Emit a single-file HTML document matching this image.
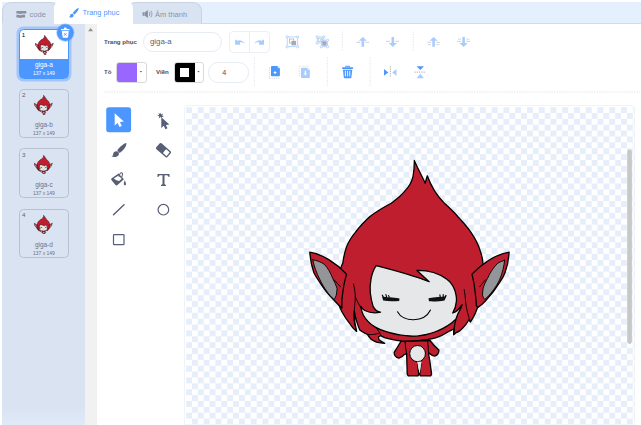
<!DOCTYPE html>
<html lang="vi">
<head>
<meta charset="utf-8">
<title>Scratch - Trang phục</title>
<style>
html,body{margin:0;padding:0;}
body{width:641px;height:425px;overflow:hidden;background:#fff;position:relative;font-family:"Liberation Sans",sans-serif;color:#575e75;}
.abs{position:absolute;}
#hdr{left:2px;top:2px;width:639px;height:21px;background:#e5f0ff;border-bottom:1px solid #d3dbe6;}
.tab{position:absolute;box-sizing:border-box;background:#d9e3f2;border:1px solid #c9d3e3;border-bottom:none;font-size:7.5px;color:#8a93a6;white-space:nowrap;}
#tab1{left:2px;top:2px;width:55px;height:22px;border-radius:9px 6px 0 0;}
#tab3{left:130px;top:2px;width:72px;height:22px;border-radius:6px 9px 0 0;}
#tab2{left:54px;top:0px;width:79px;height:24px;border-radius:8px 8px 0 0;background:#fff;border-color:#fff;color:#4c97ff;z-index:3;}
.tab span{position:absolute;}
#side{left:2px;top:23.4px;width:83px;height:402px;background:#d9e3f2;}
#sidebot{left:2px;top:408px;width:83px;height:17px;background:linear-gradient(#d9e3f2,#e1eaf7);}
#sscroll{left:85px;top:23.4px;width:12px;height:402px;background:#f1f1f1;}
.tile{position:absolute;box-sizing:border-box;left:18.8px;width:50.2px;height:49.6px;border:1.25px solid #bac1ce;border-radius:4.5px;}
.tile .num{position:absolute;left:2.3px;top:1.5px;font-size:6.2px;color:#575e75;}
.tile .nm{position:absolute;left:0;right:0;text-align:center;top:31.2px;font-size:6.4px;color:#6b7288;}
.tile .sz{position:absolute;left:0;right:0;text-align:center;top:40.2px;font-size:5px;color:#6b7288;}
.tile svg{position:absolute;left:14.7px;top:5.2px;width:18.3px;height:19.6px;}
#t1{top:28.7px;height:50.7px;border:1.7px solid #4c97ff;background:#fff;box-shadow:0 0 0 2.5px rgba(76,151,255,.38);overflow:visible;}
#t1 .lab{position:absolute;left:0;right:0;top:29.5px;bottom:0;background:#4c97ff;border-radius:0 0 2.5px 2.5px;}#t1 svg{left:15.5px;top:5.6px}#t1 .num{left:1.9px;top:1.2px}#t1 .nm{top:31.3px}#t1 .sz{top:40.1px}
#t1 .nm,#t1 .sz{color:#fff;}
.lbl{position:absolute;font-size:6.1px;font-weight:bold;color:#484d61;white-space:nowrap;}
.pill{position:absolute;box-sizing:border-box;border:1px solid #e7ebf2;border-radius:10px;background:#fff;}
.vdash{position:absolute;width:0;border-left:1px dashed #d9d9d9;}
</style>
</head>
<body>
<div id="hdr" class="abs"></div>
<div id="tab1" class="tab"><span style="left:26.6px;top:6.5px;">code</span></div>
<div id="tab3" class="tab"><span style="left:24px;top:6.5px;">Âm thanh</span></div>
<div id="tab2" class="tab"><span style="left:27.5px;top:6.800px;font-size:7.350px">Trang phục</span></div>

<div id="side" class="abs"></div>
<div id="sidebot" class="abs"></div>
<div id="sscroll" class="abs"></div>

<div id="t1" class="tile"><div class="lab"></div><span class="num" style="color:#000">1</span><span class="nm">giga-a</span><span class="sz">137 x 149</span><svg viewBox="308 159 203 218" stroke-width="3.5"><use href="#gigaart"/></svg></div>
<div id="t2" class="tile" style="top:88.8px"><span class="num">2</span><span class="nm">giga-b</span><span class="sz">137 x 149</span><svg viewBox="308 159 203 218" stroke-width="3.5"><use href="#gigaart"/></svg></div>
<div id="t3" class="tile" style="top:148.4px"><span class="num">3</span><span class="nm">giga-c</span><span class="sz">137 x 149</span><svg viewBox="308 159 203 218" stroke-width="3.5"><use href="#gigaart"/></svg></div>
<div id="t4" class="tile" style="top:208.6px"><span class="num">4</span><span class="nm">giga-d</span><span class="sz">137 x 149</span><svg viewBox="308 159 203 218" stroke-width="3.5"><use href="#gigaart"/></svg></div>

<!-- toolbar row 1 -->
<span class="lbl" style="left:104px;top:38px;">Trang phục</span>
<div class="pill" style="left:142.5px;top:31.5px;width:79px;height:20.5px;"><span style="position:absolute;left:6.5px;top:4.6px;font-size:7.8px;color:#575e75;">giga-a</span></div>

<!-- toolbar row 2 -->
<span class="lbl" style="left:104px;top:68px;">Tô</span>
<span class="lbl" style="left:156px;top:68px;">Viền</span>
<div class="pill" style="left:208px;top:61.5px;width:41px;height:21px;"><span style="position:absolute;left:13.3px;top:5.6px;font-size:7.2px;color:#4a4f63;">4</span></div>


<!-- toolbar widgets -->
<div class="abs" style="left:229px;top:31px;width:40.5px;height:21.5px;box-sizing:border-box;border:1px solid #ebeef4;border-radius:4px;"></div>
<div class="abs" style="left:249px;top:31px;width:1px;height:21.5px;background:#ebeef4;"></div>
<div class="abs" style="left:116px;top:62px;width:30.5px;height:20.5px;box-sizing:border-box;border:1px solid #d9d9d9;border-radius:3px;background:#fff;overflow:hidden;"><div style="position:absolute;left:0;top:0;width:19.5px;height:20px;background:#9966ff;"></div></div>
<div class="abs" style="left:173.5px;top:62px;width:30.5px;height:20.5px;box-sizing:border-box;border:1px solid #d9d9d9;border-radius:3px;background:#fff;overflow:hidden;"><div style="position:absolute;left:-1px;top:-1px;width:21px;height:21px;background:#000;"></div><div style="position:absolute;left:5px;top:5px;width:9px;height:9px;background:#fff;"></div></div>

<svg id="icons" class="abs" style="left:0;top:0;z-index:5;" width="641" height="425" viewBox="0 0 641 425">
<!-- tab icons -->
<g fill="#8a90a0"><path d="M16.4 10.9h9.9v2.6h-4.6l-.5.6h-1.6l-.5-.6h-2.7z"/><path d="M16.4 14.7h2.7l.5.6h1.6l.5-.6h3.4v2.7h-3.4l-.5.5h-1.6l-.5-.5h-2.7z"/></g>
<path d="M78.7 7.7c-1.5.3-4.6 3.3-5.9 5.4l1.5 1.4c2-1.4 4.6-4.7 4.4-6.8zM72.1 13.7c-1.3 0-2.2 1-2.1 2.3c0 .5-.5.9-1 .9c1.5 .9 3.5 .6 4.3-.5c.5-.8 .3-1.8-.2-2.3c-.3-.2-.6-.4-1-.4z" fill="#4c97ff"/>
<g fill="#8a90a0"><path d="M142.6 12.3h2v3.4h-2zM144.9 12.3l3-2.4v8.2l-3-2.4z"/><path d="M149.2 11.9c.8 .6 .8 3.6 0 4.2" fill="none" stroke="#8a90a0" stroke-width=".9"/><path d="M150.8 10.8c1.5 1.4 1.5 5 0 6.4" fill="none" stroke="#8a90a0" stroke-width=".8"/></g>
<!-- fill/outline dropdown carets -->
<path d="M139.7 71l1.2 1.4l1.2-1.4z" fill="#575e75"/>
<path d="M197.3 71l1.2 1.4l1.2-1.4z" fill="#575e75"/>
<!-- undo / redo -->
<g fill="#a9ccff"><path d="M235.1 39.7h1.2l.8 1c2.5-1.2 6-.3 7.8 3.3c-1.8-1.7-3.5-2-4.9-1.4v2.2h-4.9z"/><path d="M264 39.7h-1.2l-.8 1c-2.5-1.2-6-.3-7.8 3.3c1.8-1.7 3.5-2 4.9-1.4v2.2h4.9z"/></g>
<!-- group -->
<g stroke="#a9ccff" stroke-width=".8" fill="none"><rect x="287.2" y="36.9" width="10.5" height="9.8"/><rect x="317.2" y="36.9" width="6.6" height="6.1"/><rect x="321.4" y="40.2" width="6.1" height="6.5"/></g>
<g fill="#fff" stroke="#a9ccff" stroke-width=".8"><circle cx="287.2" cy="36.9" r="1.15"/><circle cx="297.7" cy="36.9" r="1.15"/><circle cx="287.2" cy="46.7" r="1.15"/><circle cx="297.7" cy="46.7" r="1.15"/>
<circle cx="317.2" cy="36.9" r="1.15"/><circle cx="323.8" cy="36.9" r="1.15"/><circle cx="317.2" cy="43" r="1.15"/><circle cx="321.4" cy="40.2" r="1.15"/><circle cx="327.5" cy="40.2" r="1.15"/><circle cx="321.4" cy="46.7" r="1.15"/><circle cx="327.5" cy="46.7" r="1.15"/></g>
<rect x="289.6" y="39" width="4.2" height="4" fill="none" stroke="#a7aab5" stroke-width=".7"/><rect x="291.4" y="40.9" width="4.7" height="4.4" fill="#a7aab5"/>
<rect x="318.5" y="38.2" width="3.6" height="3.3" fill="none" stroke="#b5b8c2" stroke-width=".6"/><rect x="322.3" y="41.2" width="4.3" height="4.5" fill="#a7aab5"/>
<!-- order arrows -->
<g fill="#a9ccff"><path d="M362.8 36.9l4.1 3.9h-2.8v5.9h-2.6v-5.9h-2.8z"/><path d="M392.8 47l4.1-4h-2.8v-6.1h-2.6v6.1h-2.8z"/><path d="M433.6 36.9l4.1 3.9h-2.8v5.9h-2.6v-5.9h-2.8z"/><path d="M463.6 47l4.1-4h-2.8v-6.1h-2.6v6.1h-2.8z"/></g>
<g stroke="#c3c6ce" stroke-width=".8" fill="none"><path d="M356.4 42.3h3.9M365.4 42.3h3.8M386 41.3h4M395.4 41.3h3.8M427.2 42.3h3.9M436.3 42.3h3.9M428.1 44.6h2.8M436.5 44.6h2.8M456.9 41.4h4.2M466.2 41.4h4M458.1 39.2h2.8M466.5 39.2h2.8"/></g>
<!-- dashed dividers -->
<g stroke="#dedede" stroke-width=".75" stroke-dasharray="1.4 1.1" fill="none"><path d="M342.3 31.5v20M413.3 31.5v20M254.3 57.5v28.5M327.3 57.5v28.5M370.1 57.5v28.5M104 92h537"/></g>
<!-- tools -->
<rect x="106.2" y="107.3" width="24.9" height="24.9" rx="2.6" fill="#4c97ff"/>
<path d="M114.7 113.2v12.3l2.9-2.5l1.9 4l2.3-1.1l-1.9-3.9l3.9-.4z" fill="#fff"/>
<g fill="#575e75">
<path d="M161.3 117.2v10.7l2.5-2.1l1.6 3.5l2.1-1l-1.6-3.4l3.5-.4z"/>
<path d="M160.6 112.4l.5 2.1l2.1-.9l-1.1 1.9l1.9 1.1l-2.2 .4l.1 1.1l-1.4-1.1l-1.700 1.500l.5-2.2l-2.1-.5l2-1l-.9-2l1.8 1.1z"/>
<path d="M126.3 143.1c-2.400 .2-7.200 4.500-9.100 7.500l2.500 2.400c3.200-1.900 7.300-6.600 6.600-9.900zM116.400 151.300c-2 0-3.400 1.500-3.300 3.400c0 .8-.9 1.400-1.900 1.300c2.400 1.600 5.900 1.200 7.300-.8c.8-1.200 .5-2.700-.4-3.400c-.5-.3-1.100-.5-1.700-.5z"/>
<g transform="translate(163.5 150.2) rotate(41)"><rect x="-7.4" y="-3.9" width="14.8" height="7.8" rx="1.4"/><rect x="1.3" y="-2.5" width="4.8" height="5" rx=".6" fill="#fff"/></g>

<path d="M111.7 178.3l6.9-4.7l5.3 5.7l-6.4 5.7q-1.2 .9-2.2-.3l-3.9-4.8q-.7-.9 .3-1.600zM124.700 180.200c.8 1.300 1.300 2.500 1.300 3.700c0 .9-.5 1.400-1.100 1.400s-1.100-.5-1.100-1.400c0-1.200 .4-2.400 .9-3.700z"/><path d="M113.800 178.600l4.700-3.200l3.200 3.400l-2.600 2.300q-3-.3-5.300-2.500z" fill="#fff"/>
<path d="M121.900 172.300c-1-.3-2.200 .6-2.800 2.200l-.7 2.200l.9 .4l.7-2.300c.4-1.100 1.100-1.700 1.500-1.600s.6 .9 .3 2l-.6 2.100l.9 .4l.7-2.200c.5-1.600 .1-2.900-.9-3.200z"/>
<path d="M157.500 173.900h12v3h-.9q-.3-1.700-1.700-1.700h-2.400v8.600q0 1.100 1.500 1.200v.9h-5v-.9q1.500-.1 1.500-1.200v-8.600h-2.400q-1.400 0-1.700 1.700h-.9z"/>
</g>
<path d="M113.5 214.8l10.5-10.1" stroke="#575e75" stroke-width="1.4" stroke-linecap="round" fill="none"/>
<circle cx="163.4" cy="209.7" r="5.3" stroke="#575e75" stroke-width="1.2" fill="none"/>
<rect x="113.5" y="234.6" width="10.5" height="10" rx=".6" stroke="#575e75" stroke-width="1.2" fill="none"/>
<path d="M117.2 177.3l3.4-2.3l2 3l-3.4 2.3z" fill="#fff" opacity="0"/>
<!-- sidebar scroll arrow -->
<path d="M88.1 31.2l2.500-3.100l2.500 3.100z" fill="#909090"/>
<!-- delete button -->
<circle cx="65.3" cy="32.6" r="9.3" fill="#4c97ff" opacity=".35"/>
<circle cx="65.3" cy="32.6" r="8.4" fill="#4c97ff"/>
<g fill="#fff"><rect x="61" y="29" width="8.6" height="1.3" rx=".5"/><path d="M64 27.6h2.6v1.4h-2.6z"/><path d="M61.9 30.9h6.8l-.6 6.1q-.1 .8-.9 .8h-3.8q-.8 0-.9-.8z"/></g>
<path d="M64.1 33.2l2.4 2.5M66.5 33.2l-2.4 2.5" stroke="#4c97ff" stroke-width=".9" fill="none"/>
<!-- copy / paste -->
<path d="M269.4 67.4v11.2M269.4 78.3h10" stroke="#c9ccd3" stroke-width=".8" stroke-dasharray="1.2 1" fill="none"/>
<path d="M271 66.8q0-.8 .8-.8h5.8l2.3 2.3v7.2q0 .8-.8 .8h-7.3q-.8 0-.8-.8z" fill="#4c97ff"/>
<path d="M277.6 66v1.6q0 .7 .7 .7h1.6z" fill="#cfe2ff"/>
<path d="M275 70.6l.6 1.4l1.4 .6l-1.4 .6l-.6 1.4l-.6-1.4l-1.4-.6l1.4-.6z" fill="#fff"/>
<path d="M299.3 76.3v-10.1h10" stroke="#d5d8de" stroke-width=".8" stroke-dasharray="1.2 1" fill="none"/>
<path d="M301 68.6q0-.8 .8-.8h5.7l2.3 2.3v7.2q0 .8-.8 .8h-7.2q-.8 0-.8-.8z" fill="#a9ccff"/>
<path d="M307.5 67.8v1.6q0 .7 .7 .7h1.6z" fill="#e2eeff"/>
<path d="M304.7 70.8h1.4v2.6h1.1l-1.8 2.1l-1.8-2.1h1.1z" fill="#fff"/>
<!-- trash -->
<g fill="#4c97ff"><path d="M346 65.7h3.2q.7 0 .7 .7v1h-1v-.7h-2.6v.7h-1v-1q0-.7 .7-.7z"/><rect x="342" y="67.3" width="11.2" height="1.8" rx=".8"/><path d="M342.9 69.7h9.4l-.9 7.6q-.1 .9-1 .9h-5.6q-.9 0-1-.9z"/></g>
<path d="M345.4 70.8v5.6M347.6 70.8v5.6M349.8 70.8v5.6" stroke="#fff" stroke-width=".9" fill="none"/>
<!-- flips -->
<path d="M384 69.1l4.3 3.3l-4.3 3.3z" fill="#4c97ff"/><path d="M396.5 69.1l-4.3 3.3l4.3 3.3z" fill="#a9ccff"/><path d="M390.4 66.2v11.5" stroke="#9a9eab" stroke-width=".8" stroke-dasharray="1.3 1" fill="none"/>
<path d="M416.6 66.2h7.4l-3.7 3.9z" fill="#4c97ff"/><path d="M416.6 78.2h7.4l-3.7-4.4z" fill="#a9ccff"/><path d="M414.4 72.1h11.6" stroke="#9a9eab" stroke-width=".8" stroke-dasharray="1.3 1" fill="none"/>
</svg>

<!-- canvas -->
<div id="cv" class="abs" style="left:184px;top:105px;width:451px;height:330px;box-sizing:border-box;border:1px solid #f0f3f7;border-radius:3px;background:#fff;"></div>
<svg id="art" class="abs" style="left:0;top:0;" width="641" height="425" viewBox="0 0 641 425">
<defs>
<pattern id="chk" x="186.1" y="107.1" width="11.755" height="11.755" patternUnits="userSpaceOnUse">
<rect x="0" y="0" width="5.8775" height="5.8775" fill="#e6eef9"/>
<rect x="5.8775" y="5.8775" width="5.8775" height="5.8775" fill="#e6eef9"/>
</pattern>
<clipPath id="cvclip"><rect x="186.1" y="107.1" width="447.4" height="320"/></clipPath>
</defs>
<rect x="186.1" y="107.1" width="447.4" height="320" fill="url(#chk)"/>
<g id="giga" clip-path="url(#cvclip)" stroke-width="1.3"><g id="gigaart" stroke="#000" stroke-linejoin="round" stroke-linecap="round">
<!-- body -->
<path d="M401.2 341 C398.5 345.5 396.300 349 394.200 352.300 C394 355.200 396 357.700 398.900 358.200 C401 357.700 402.800 356.500 404.200 354.700 L406.600 353.700 C406.900 360 407 368 407.200 373.400 Q407.300 375.800 409.500 375.900 L417 375.900 Q418.800 375.800 418.600 373.600 L417.500 362 L421.300 362 L419.700 373.600 Q419.500 375.800 421.500 375.900 L429.500 375.900 Q431.700 375.800 431.500 373.400 C430.800 367 429.600 360 428.600 353.500 L429.300 353.200 C431 354.800 432.800 355.800 434.700 356.100 C437.300 355.200 439 352.800 438.900 350 C435.500 347 432.500 344 430 340.500Z" fill="#bf1e2e"/>
<path d="M417.300 361.500 L419.600 373.500 L421.500 361.500Z" fill="#e6e7e8" stroke="none"/>
<ellipse cx="417.600" cy="353.600" rx="7.900" ry="8.100" fill="#e6e7e8" stroke-width="1"/>
<path d="M417.300 361.700 L419.600 373.500 L421.400 361.700Z" fill="#e6e7e8" stroke="none"/>
<path d="M405.100 342.300 C405.300 346 405.800 350 406.700 354 M427.700 341.500 C428.200 346 428.300 350 428.500 353.500" fill="none" stroke-width="1"/>
<!-- hair back silhouette -->
<path id="hairback" d="M414.3 160.5 C417 167 422 176 425.2 183.2 L427.3 175.8 C431 186 437 196 444.4 203.2 C450 208.5 455 213 457.7 216.5 C462 221 467 226.5 471 232.4 C475.5 239 478.5 245 480.3 251 C482 256 482.8 260 482.9 263 C484 275 483 290 479.4 302 C477 310 474 317 470.4 322 C469.8 321 469.4 320.3 469 319.5 C467.5 322.5 465.5 325.5 463 327.8 C462 328.800 461 329.800 460 330.600 C458.800 331.400 457.500 332.100 456.100 332.700 C455.300 333.400 454.500 334.100 453.700 334.800 L453.800 329 C452.400 329.700 451 330.300 449.500 331 C447.400 332.300 445.200 333.600 443 334.800 C440.300 336 437.500 337.100 434.700 338.100 C432 338.700 429.300 339.300 426.500 339.700 C423.800 340.100 421 340.400 418.200 340.600 C415.500 340.800 412.800 341 410 341 C407 341.200 404 341.200 401.200 341 C398.400 340.700 395.700 340.300 393 339.700 C390.200 339.100 387.400 338.500 384.700 337.700 C383.300 337.100 381.900 336.400 380.600 335.600 C379.900 336 379.200 336.400 378.500 336.800 C378.600 337.800 378.800 338.800 379 339.700 C380.800 341.100 382.700 342.300 384.700 343.400 C381.900 343.200 379.200 342.800 376.500 342.200 C374.500 341.300 372.500 340.200 370.700 338.900 C369.500 337.500 368.400 336 367.400 334.400 C364.800 333.200 362.300 331.800 360 330.200 C357.500 325 355.500 318 354.300 311 C354 318 355 325 356.600 331.400 C353.500 329 351 326 349.200 322.800 C346.500 319.500 344.500 316.500 342.600 313 C340.500 309.500 339 305.500 337.600 301.400 C336.500 287 338 272 342.800 263 C343.500 258 344.500 253 346 248.400 C348 242.500 351.500 237 355.300 232.400 C359.500 226.500 364.500 221.500 369.900 216.500 C377 211 384 207 391.200 203.200 C397 199 402 195 405.800 189.900 C409.500 186 411.800 181.500 413 176.600 C414 171 414.400 166 414.300 160.500Z" fill="#bf1e2e"/>
<!-- ears -->
<path d="M309.8 252.2 C322 254 336 263 346.5 274.1 C344.5 281 343 289 342.3 296 C341.8 300 341.7 304 341.9 308 C339 305.5 336.5 303 334.1 300.3 C328.5 294.5 323.5 288.5 320 282.6 C317.5 279 315.5 276 313.9 272.7 C311.5 266 310.2 259 309.8 252.2Z" fill="#bf1e2e"/>
<path d="M312.8 259.8 C317 260.5 321 262 324.2 264.2 C328 268 330.5 273 332.7 278.4 C334.5 282 336 285 337 288.2 C337 291 336.7 293 336.2 295.3 C335.6 297 335 298.5 334.1 299.5 C329 295 324 288 320 279.8 C316.5 273 314 266 312.8 259.8Z" fill="#939598" stroke-width=".9"/>
<path d="M334.1 279.8 L340.5 286.8" fill="none" stroke-width=".9"/>
<path d="M509.1 252.2 C497 254 483 263 472 274.1 C473.8 281 475 289 475.6 296 C476 300 476.3 303 476.4 306 L478.3 307.3 C481 305.5 483 303.5 485.4 301 C491 295 496 288.5 499.5 282.6 C502 279 503.8 276 505 272.7 C507.5 266 508.7 259 509.1 252.2Z" fill="#bf1e2e"/>
<path d="M504.6 260.3 C502 261 499.5 262 497.4 263.5 C493 268 490 273 487.5 278.4 C485.5 282 484 285 483.2 288.2 C482.7 291 482.5 293 482.5 295.3 C483 297 483.8 298.5 484.7 299.5 C490 295 495.5 288 499.5 280 C502.5 273 504 266 504.6 260.3Z" fill="#939598" stroke-width=".9"/>
<path d="M485.4 279.8 L479.7 286.8" fill="none" stroke-width=".9"/>
<!-- face -->
<path id="face" stroke="none" d="M360.7 306.4 C361.2 309.5 362 312.5 363.3 315 C364.6 317.5 366.2 319.7 368.2 321.6 C370.3 323.8 372.8 325.8 375.7 327.4 C378.5 328.9 381.5 330.1 384.7 331.1 C387.4 332 390.2 332.8 393 333.5 C395.7 334.2 398.4 334.8 401.2 335.2 C404 335.6 407 335.9 410 336 C412.8 336.1 415.5 336 418.2 335.8 C421 335.5 423.8 335.1 426.5 334.5 C429.3 333.8 432 333 434.7 332 C437.5 331 440.3 329.700 443 328.300 C445.900 326.800 448.600 325.100 451.200 323.200 C452.600 322.200 453.800 321.100 454.900 320 L464 305 L460 280 L440 262 L400 258 L374 264 L362 290Z" fill="#e6e7e8"/>
<!-- front hair fills (no stroke) -->
<path d="M376.2 265.7 C371 273 369.5 285 370.3 293.2 C371 299 372 303 373.1 306.4 C375 310 378 312 380.5 312.1 C375 313.5 369 312.5 364.8 310.5 C363 309.5 361.5 308 360.7 306.4 L350 300 L352 270 L368 255 L400 250 L450 255 L470 280 L470 310 L455 322 C455.5 319 456.5 316.5 458 313.5 C459.5 311 461 308 462.1 304.7 C459.5 309 456 312 452.7 313 C455 309.5 456 306 456.4 301.4 C456.8 298 456 294 454.7 289.9 C453 285.5 450 281.5 446.5 279 C439 273.5 428 270.2 416.9 270.4 L429.2 281.7 C412 275 393 270 376.2 265.7Z" fill="#bf1e2e" stroke="none"/>
<!-- front hair strokes -->
<path d="M376.2 265.7 C371 273 369.5 285 370.3 293.2 C371 299 372 303 373.1 306.4 C375 310 378 312 380.5 312.1 C375 313.5 369 312.5 364.8 310.5 C363 309.5 361.5 308 360.7 306.4" fill="none"/><path d="M360.7 306.4 C361.2 309.5 362 312.5 363.3 315 C364.6 317.5 366.2 319.7 368.2 321.6 C370.3 323.8 372.8 325.8 375.7 327.4 C378.5 328.9 381.5 330.1 384.7 331.1 C387.4 332 390.2 332.8 393 333.5 C395.7 334.2 398.4 334.8 401.2 335.2 C404 335.6 407 335.9 410 336 C412.8 336.1 415.5 336 418.2 335.8 C421 335.5 423.8 335.1 426.5 334.5 C429.3 333.8 432 333 434.7 332 C437.5 331 440.3 329.700 443 328.300 C445.900 326.800 448.600 325.100 451.200 323.200 C452.600 322.200 453.800 321.100 454.900 320" fill="none"/>
<path d="M376.2 265.7 C393 270 412 275 429.2 281.7 L416.9 270.4 C428 270.2 439 273.5 446.5 279 C450 281.5 453 285.5 454.7 289.9 C456 294 456.8 298 456.4 301.4 C456 306 455 309.5 452.7 313 C456 312 459.5 309 462.1 304.7 C461 308 459.5 311 458 313.5 C456.5 317 455.2 321 454.7 324.5 C454.2 328 454 331 453.7 334.2" fill="none"/>
<!-- strand lines -->
<path d="M353.5 284 C354.5 288 355.2 292.5 355.3 296.7 C355.2 300 354.9 303.5 354.6 306.6 C354.2 311 354 316 353.9 320 C354.5 324 355.4 328 356.6 331.4" fill="none" stroke-width=".9"/>
<path d="M355.3 296.7 C357 301 358.8 304.5 361 308" fill="none" stroke-width=".9"/>
<path d="M367.400 334.400 C371 334.900 375.500 334.700 379.800 332.900 M375.700 327.400 C377.300 329.100 378.600 330.900 379.800 332.900 C380.200 333.800 380.500 334.700 380.600 335.600" fill="none" stroke-width=".9"/>
<path d="M464.2 289.5 C465 294 465.4 298 465.6 302.4 C466.5 309 468 315 470.2 321.5" fill="none" stroke-width=".9"/>
<!-- eyes / mouth -->
<path d="M382 296.4 C386 297.4 393 296.8 399.5 298.4 L399.2 301 C394 301.4 388 301.5 383.2 300.6 Z" fill="#111" stroke="none"/>
<path d="M383.2 296.6 L382.3 295.2 M386.6 297 L385.9 294.6 M389.2 297 L388.6 295.6" fill="none" stroke-width="1.1"/>
<path d="M428.5 298.2 C435 296.6 441 297.4 446.5 296.2 L444.5 300.4 C440 301.4 434 301.5 429 301.3 Z" fill="#111" stroke="none"/>
<path d="M440.2 297 L439.9 294.8 M443.2 296.9 L443.2 294.6 M445.3 296.6 L446 295.4" fill="none" stroke-width="1.1"/>
<path d="M397.5 311.8 C403 322.5 424 323 430.5 310" fill="none" stroke-width="1.1"/>
</g></g>
<rect x="627.2" y="149.6" width="4.7" height="194.3" rx="2.35" fill="#c8c8c8"/>
</svg>
</body>
</html>
